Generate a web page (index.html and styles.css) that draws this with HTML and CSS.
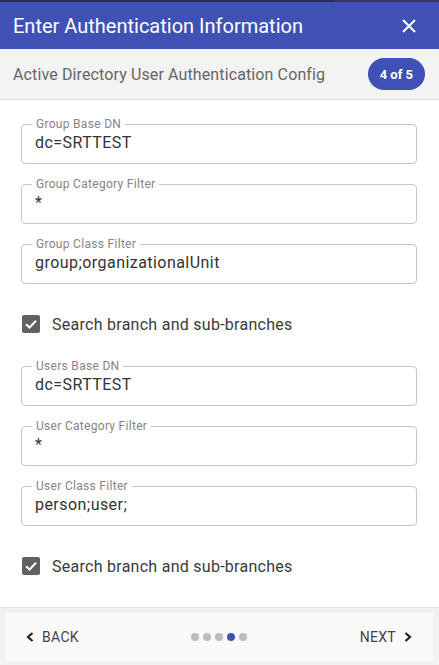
FILE: index.html
```html
<!DOCTYPE html>
<html>
<head>
<meta charset="utf-8">
<link rel="stylesheet" href="styles.css">
</head>
<body>
<div class="page">
  <div class="backdrop"><div class="bd-left"></div><div class="bd-right"></div></div>
  <header class="header">
    <h1 class="title">Enter Authentication Information</h1>
    <svg class="close" viewBox="0 0 14 14" width="14" height="14"><path d="M1 1 L13 13 M13 1 L1 13" stroke="#fff" stroke-width="2" fill="none"/></svg>
  </header>
  <div class="subheader">
    <span class="subtitle">Active Directory User Authentication Config</span>
    <span class="badge">4 of 5</span>
  </div>
  <main class="content">
    <div class="field"><span class="label">Group Base DN</span><span class="value">dc=SRTTEST</span></div>
    <div class="field"><span class="label">Group Category Filter</span><span class="value">*</span></div>
    <div class="field"><span class="label">Group Class Filter</span><span class="value">group;organizationalUnit</span></div>
    <div class="check-row">
      <span class="checkbox"><svg viewBox="0 0 18 18" width="18" height="18"><path d="M4 9.2 L7.5 12.5 L14 5.8" stroke="#fff" stroke-width="2" fill="none"/></svg></span>
      <span class="check-label">Search branch and sub-branches</span>
    </div>
    <div class="field"><span class="label">Users Base DN</span><span class="value">dc=SRTTEST</span></div>
    <div class="field"><span class="label">User Category Filter</span><span class="value">*</span></div>
    <div class="field"><span class="label">User Class Filter</span><span class="value">person;user;</span></div>
    <div class="check-row">
      <span class="checkbox"><svg viewBox="0 0 18 18" width="18" height="18"><path d="M4 9.2 L7.5 12.5 L14 5.8" stroke="#fff" stroke-width="2" fill="none"/></svg></span>
      <span class="check-label">Search branch and sub-branches</span>
    </div>
  </main>
  <footer class="footer">
    <div class="nav">
      <span class="nav-btn back"><svg viewBox="0 0 8 10" width="8" height="10"><path d="M6.5 1 L2 5 L6.5 9" stroke="#222" stroke-width="2.2" fill="none"/></svg>BACK</span>
      <span class="dots"><i class="dot"></i><i class="dot"></i><i class="dot"></i><i class="dot active"></i><i class="dot"></i></span>
      <span class="nav-btn next">NEXT<svg viewBox="0 0 8 10" width="8" height="10"><path d="M1.5 1 L6 5 L1.5 9" stroke="#222" stroke-width="2.2" fill="none"/></svg></span>
    </div>
  </footer>
</div>
</body>
</html>
```
FILE: styles.css
```css
* { box-sizing: border-box; }
html, body { margin: 0; padding: 0; }
body { font-family: Roboto, "Liberation Sans", sans-serif; background: #fff; }
.page { width: 439px; height: 665px; display: flex; flex-direction: column; overflow: hidden; }

.backdrop { height: 2px; display: flex; }
.bd-left { width: 334px; background: #262a5c; }
.bd-right { flex: 1; background: #3a3a3a; }

.header { height: 47px; background: #3f51b5; display: flex; align-items: center; justify-content: space-between; padding: 0 23px 0 13px; }
.title { margin: 0; font-size: 20px; font-weight: 400; color: #fff; line-height: 1; }
.close { display: block; }

.subheader { height: 51px; background: #f3f3f3; border-bottom: 1px solid #dcdcdc; display: flex; align-items: center; justify-content: space-between; padding: 0 14px 0 13px; }
.subtitle { font-size: 16px; letter-spacing: 0.12px; color: #666; }
.badge { height: 32px; padding: 0 12px; border-radius: 16px; background: #3f51b5; color: #fff; font-size: 13px; font-weight: 700; display: flex; align-items: center; }

.content { flex: 1; padding: 24px 22px 0 21px; display: flex; flex-direction: column; gap: 20px; }
.field { position: relative; height: 40px; border: 1px solid #c6c6c6; border-radius: 4px; padding: 8px 13px 0 13px; }
.label { position: absolute; top: -8px; left: 10px; padding: 0 4px; background: #fff; font-size: 12px; letter-spacing: 0.3px; line-height: 14px; color: #858585; }
.value { font-size: 16px; letter-spacing: 0.45px; line-height: 19px; color: #333; display: block; }

.check-row { display: flex; align-items: center; height: 18px; margin: 11px 0 13px 1px; }
.checkbox { width: 18px; height: 18px; border-radius: 2px; background: #616161; display: flex; }
.check-label { margin-left: 12px; font-size: 16px; letter-spacing: 0.27px; color: #3a3a3a; }

.footer { border-top: 1px solid #e0e0e0; background: #f2f2f2; padding: 5px 6px 4px 5px; }
.nav { height: 48px; background: #f9f9f9; display: flex; align-items: center; justify-content: space-between; padding: 0 21px 0 21px; position: relative; }
.nav-btn { display: flex; align-items: center; font-size: 14px; letter-spacing: 0.3px; color: #444; gap: 8px; }
.nav-btn svg { display: block; }
.dots { position: absolute; left: 186px; top: 20px; display: flex; gap: 4px; }
.dot { width: 8px; height: 8px; border-radius: 50%; background: #bdbdbd; display: block; }
.dot.active { background: #3f51b5; }
```
